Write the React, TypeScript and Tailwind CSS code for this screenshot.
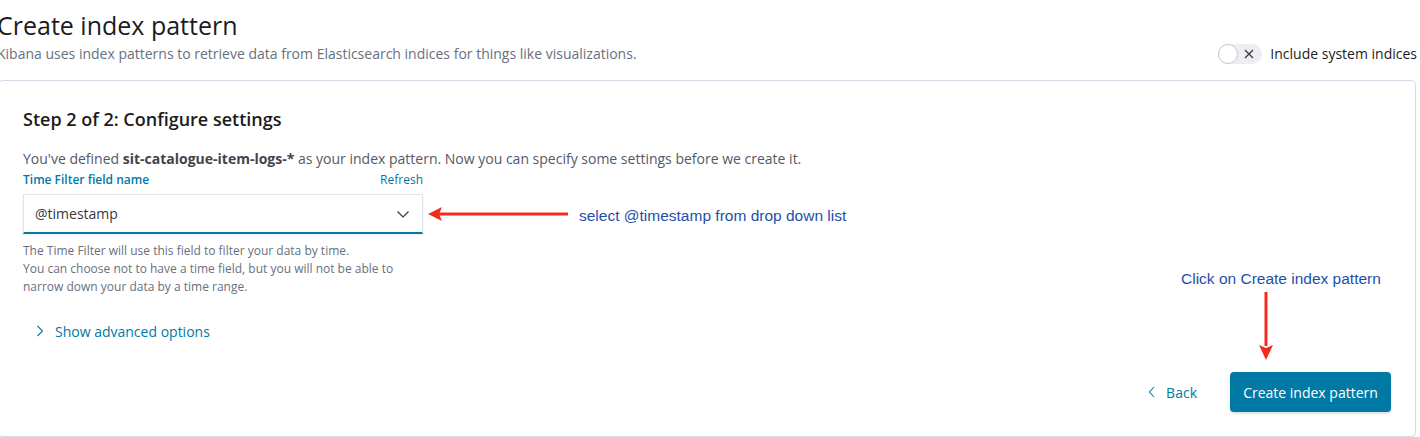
import React from "react";

const font = { fontFamily: '"Open Sans", "Noto Sans", sans-serif' };
const annot = { fontFamily: '"Liberation Sans", Arial, sans-serif' };

function ChevronDown() {
  return (
    <svg width="16" height="16" viewBox="0 0 16 16" fill="none">
      <path d="M2.5 5.5L8 11l5.5-5.5" stroke="#343741" strokeWidth="1.2" />
    </svg>
  );
}

export default function App() {
  return (
    <div className="relative w-[1420px] h-[437px] overflow-hidden bg-white" style={font}>
      <div className="ml-[-3px] w-[1420px]">
        {/* Header */}
        <div className="flex items-end justify-between pt-[7px]">
          <div className="flex flex-col gap-[1px]">
            <h1 className="text-[25px] leading-[36px] font-medium text-[#1a1c21]">Create index pattern</h1>
            <p className="text-[14px] leading-[20px] text-[#69707d]">
              Kibana uses index patterns to retrieve data from Elasticsearch indices for things like visualizations.
            </p>
          </div>
          <div className="flex items-center gap-[8px]">
            <div className="relative w-[44px] h-[20px] rounded-full bg-[#eceef1] flex items-center">
              <div className="w-[20px] h-[20px] rounded-full bg-white border border-[#c5c9d0]" />
              <svg className="absolute left-[26px] top-[5px]" width="10" height="10" viewBox="0 0 10 10">
                <path d="M1 1l8 8M9 1l-8 8" stroke="#343741" strokeWidth="1.2" />
              </svg>
            </div>
            <span className="text-[14px] leading-[20px] text-[#1a1c21]">Include system indices</span>
          </div>
        </div>

        {/* Panel */}
        <div className="mt-[16px] mr-[1px] ml-[1px] h-[357px] border border-[#d3dae6] rounded-[5px] shadow-[0_1px_2px_rgba(0,0,0,0.06)] bg-white pl-[24px] pr-[24px] pt-[26px] flex flex-col">
          <h2 className="text-[18px] leading-[24px] font-semibold text-[#1a1c21]">Step 2 of 2: Configure settings</h2>
          <p className="mt-[18px] text-[14px] leading-[20px] text-[#535966]">
            You've defined <span className="font-bold text-[#3f4450]">sit-catalogue-item-logs-*</span> as your index pattern. Now you can specify some settings before we create it.
          </p>
          <div className="w-[400px] mt-[2px]">
            <div className="flex items-center justify-between h-[18px]">
              <span className="text-[12px] font-semibold text-[#0079a5]">Time Filter field name</span>
              <span className="text-[12px] text-[#0079a5]">Refresh</span>
            </div>
            <div className="mt-[5px] h-[40px] border border-[#e0e4ea] border-b-2 border-b-[#0079a5] bg-white shadow-[0_1px_2px_rgba(0,0,0,0.08)] flex items-center justify-between pl-[11px] pr-[11px]">
              <span className="text-[14px] text-[#343741]">@timestamp</span>
              <ChevronDown />
            </div>
            <div className="mt-[8px] text-[12px] leading-[18px] text-[#69707d]">
              <div>The Time Filter will use this field to filter your data by time.</div>
              <div>You can choose not to have a time field, but you will not be able to narrow down your data by a time range.</div>
            </div>
          </div>
          <div className="mt-[25px] flex items-center gap-[10px] pl-[12px] h-[20px]">
            <svg width="10" height="12" viewBox="0 0 10 12">
              <path d="M2.5 1l5 5-5 5" stroke="#0079a5" strokeWidth="1.1" fill="none" />
            </svg>
            <span className="text-[14px] text-[#0079a5]">Show advanced options</span>
          </div>
          <div className="mt-[31px] flex items-center justify-end gap-[33px]">
            <div className="flex items-center gap-[10px]">
              <svg width="8" height="12" viewBox="0 0 8 12">
                <path d="M6 1L1.5 6 6 11" stroke="#0079a5" strokeWidth="1.1" fill="none" />
              </svg>
              <span className="text-[14px] text-[#0079a5]">Back</span>
            </div>
            <button className="h-[40px] w-[161px] rounded-[4px] bg-[#0079a5] text-white text-[14px] font-medium shadow-[0_2px_2px_rgba(0,0,0,0.12)]">
              Create index pattern
            </button>
          </div>
        </div>
      </div>

      {/* Annotations */}
      <svg className="absolute left-[424px] top-[204px]" width="150" height="20" viewBox="0 0 150 20">
        <line x1="14" y1="10" x2="144" y2="10" stroke="#f52a1f" strokeWidth="3" />
        <polygon points="4,10 18,3 15,10 18,17" fill="#f52a1f" />
      </svg>
      <div className="absolute left-[579px] top-[206px] text-[15.5px] leading-[20px] text-[#1d4fa8]" style={annot}>
        select @timestamp from drop down list
      </div>
      <div className="absolute left-[1181px] top-[269px] text-[15.5px] leading-[20px] text-[#1d4fa8]" style={annot}>
        Click on Create index pattern
      </div>
      <svg className="absolute left-[1256px] top-[290px]" width="20" height="72" viewBox="0 0 20 72">
        <line x1="10" y1="2" x2="10" y2="56" stroke="#f52a1f" strokeWidth="3" />
        <polygon points="10,70 3,55 10,58 17,55" fill="#f52a1f" />
      </svg>
    </div>
  );
}
